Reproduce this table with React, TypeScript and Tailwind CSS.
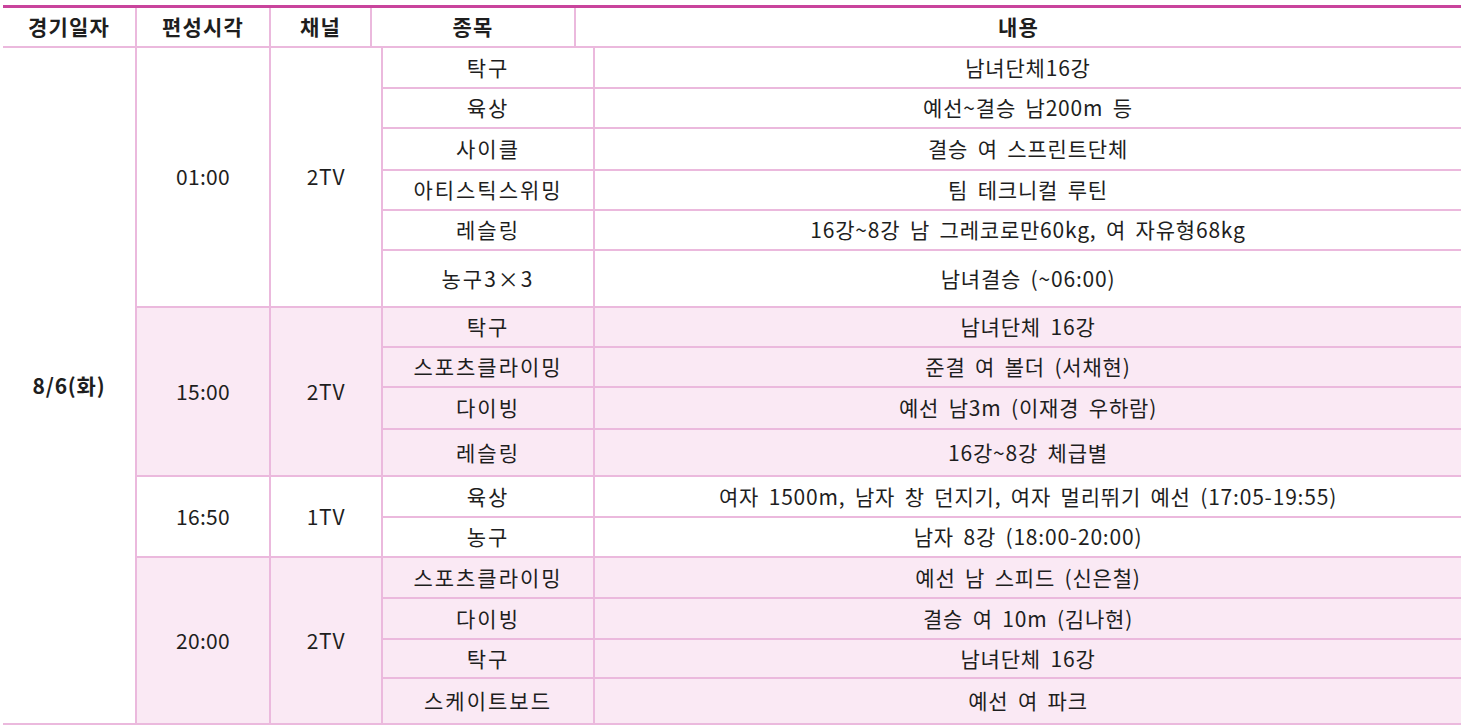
import React from "react";

interface Item {
  sport: string;
  detail: string;
  h: string;
}

interface Slot {
  time: string;
  channel: string;
  pink: boolean;
  items: Item[];
}

const slots: Slot[] = [
  {
    time: "01:00",
    channel: "2TV",
    pink: false,
    items: [
      { sport: "탁구", detail: "남녀단체16강", h: "h-[41px]" },
      { sport: "육상", detail: "예선~결승 남200m 등", h: "h-[40px]" },
      { sport: "사이클", detail: "결승 여 스프린트단체", h: "h-[42px]" },
      { sport: "아티스틱스위밍", detail: "팀 테크니컬 루틴", h: "h-[40px]" },
      { sport: "레슬링", detail: "16강~8강 남 그레코로만60kg, 여 자유형68kg", h: "h-[40px]" },
      { sport: "농구3×3", detail: "남녀결승 (~06:00)", h: "h-[55px]" },
    ],
  },
  {
    time: "15:00",
    channel: "2TV",
    pink: true,
    items: [
      { sport: "탁구", detail: "남녀단체 16강", h: "h-[40px]" },
      { sport: "스포츠클라이밍", detail: "준결 여 볼더 (서채현)", h: "h-[40px]" },
      { sport: "다이빙", detail: "예선 남3m (이재경 우하람)", h: "h-[42px]" },
      { sport: "레슬링", detail: "16강~8강 체급별", h: "h-[45px]" },
    ],
  },
  {
    time: "16:50",
    channel: "1TV",
    pink: false,
    items: [
      { sport: "육상", detail: "여자 1500m, 남자 창 던지기, 여자 멀리뛰기 예선 (17:05-19:55)", h: "h-[41px]" },
      { sport: "농구", detail: "남자 8강 (18:00-20:00)", h: "h-[38px]" },
    ],
  },
  {
    time: "20:00",
    channel: "2TV",
    pink: true,
    items: [
      { sport: "스포츠클라이밍", detail: "예선 남 스피드 (신은철)", h: "h-[41px]" },
      { sport: "다이빙", detail: "결승 여 10m (김나현)", h: "h-[41px]" },
      { sport: "탁구", detail: "남녀단체 16강", h: "h-[39px]" },
      { sport: "스케이트보드", detail: "예선 여 파크", h: "h-[44px]" },
    ],
  },
];

const line = "border-[#ebb9dd]";

export default function App() {
  return (
    <div className="min-h-[728px] bg-white pt-[5px] font-['Noto_Sans_CJK_KR','Noto_Sans',sans-serif] text-[21px] tracking-[0.8px] [word-spacing:4px] text-[#1e1e1e]">
      <div className="ml-[3px] w-[1458px]">
        {/* header */}
        <div className={`flex h-[43px] border-t-[3px] border-t-[#c9449c] border-b-2 ${line} font-bold tracking-[1.2px]`}>
          <div className="flex w-[132px] items-center justify-center">경기일자</div>
          <div className={`flex w-[134px] items-center justify-center border-l-2 ${line}`}>편성시각</div>
          <div className={`flex w-[101px] items-center justify-center border-l-2 ${line}`}>채널</div>
          <div className={`flex w-[204px] items-center justify-center border-l-2 ${line}`}>종목</div>
          <div className={`flex flex-1 items-center justify-center border-l-2 ${line}`}>내용</div>
        </div>

        {/* body */}
        <div className={`flex border-b-2 ${line}`}>
          <div className="flex w-[132px] items-center justify-center font-bold">8/6(화)</div>
          <div className="flex flex-1 flex-col">
            {slots.map((slot, gi) => (
              <div
                key={slot.time}
                className={`flex ${gi < slots.length - 1 ? "border-b-2" : ""} ${line} ${
                  slot.pink ? "bg-[#fae9f4]" : "bg-white"
                }`}
              >
                <div className={`flex w-[134px] items-center justify-center border-l-2 ${line} tracking-[0.3px]`}>
                  {slot.time}
                </div>
                <div className={`flex w-[112px] items-center justify-center border-l-2 ${line}`}>
                  {slot.channel}
                </div>
                <div className={`flex flex-1 flex-col border-l-2 ${line}`}>
                  {slot.items.map((it, i) => (
                    <div
                      key={i}
                      className={`flex ${it.h} ${i < slot.items.length - 1 ? "border-b-2" : ""} ${line}`}
                    >
                      <div className="flex w-[210px] items-center justify-center tracking-[2px]">{it.sport}</div>
                      <div className={`flex flex-1 items-center justify-center border-l-2 ${line}`}>
                        {it.detail}
                      </div>
                    </div>
                  ))}
                </div>
              </div>
            ))}
          </div>
        </div>
      </div>
    </div>
  );
}
